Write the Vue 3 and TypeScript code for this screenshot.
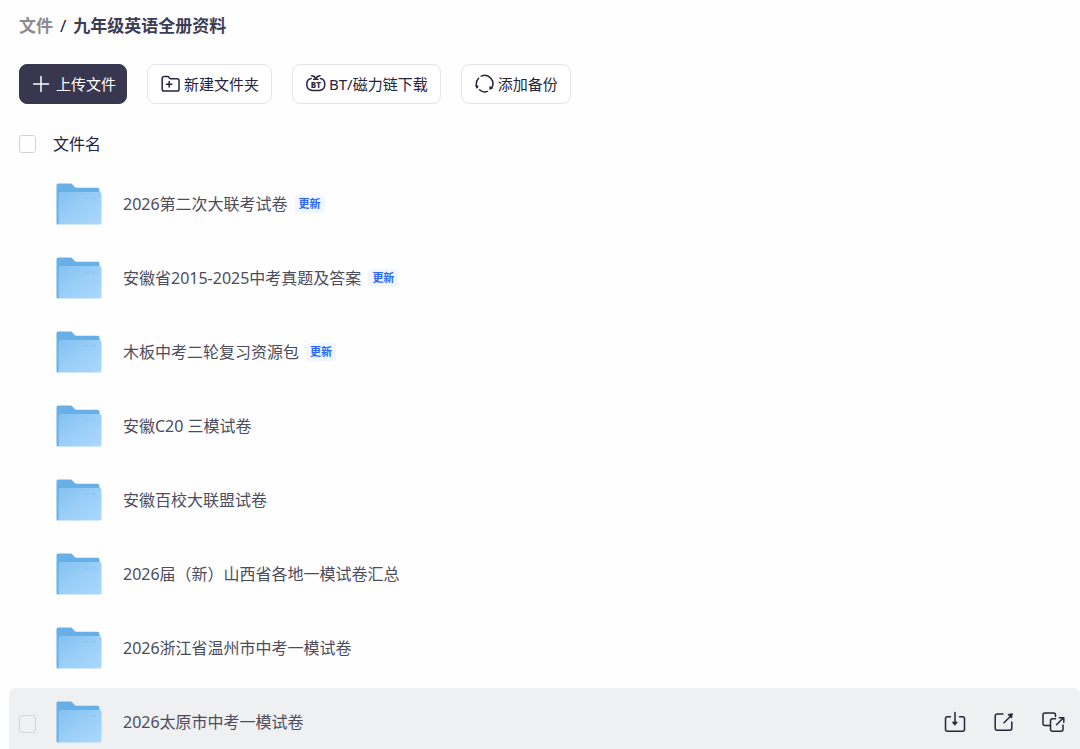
<script setup lang="ts">
import { computed, ref } from 'vue'

interface FolderItem {
  id: number
  name: string
  updated: boolean
}

const folders: FolderItem[] = [
  { id: 1, name: '2026第二次大联考试卷', updated: true },
  { id: 2, name: '安徽省2015-2025中考真题及答案', updated: true },
  { id: 3, name: '木板中考二轮复习资源包', updated: true },
  { id: 4, name: '安徽C20 三模试卷', updated: false },
  { id: 5, name: '安徽百校大联盟试卷', updated: false },
  { id: 6, name: '2026届（新）山西省各地一模试卷汇总', updated: false },
  { id: 7, name: '2026浙江省温州市中考一模试卷', updated: false },
  { id: 8, name: '2026太原市中考一模试卷', updated: false },
]

const activeId = ref(8)
const selected = ref<number[]>([])

const allSelected = computed({
  get: () => selected.value.length === folders.length,
  set: (on: boolean) => {
    selected.value = on ? folders.map((f) => f.id) : []
  },
})
</script>

<template>
  <main class="page">
    <nav class="crumbs" aria-label="路径">
      <a href="#" class="crumb-link">文件</a>
      <span class="crumb-sep">/</span>
      <span class="crumb-current">九年级英语全册资料</span>
    </nav>

    <div class="toolbar">
      <button type="button" class="btn btn-primary">
        <svg class="btn-icon" viewBox="0 0 20 20"><path d="M8 2.5v15M.5 10h15" /></svg>
        <span>上传文件</span>
      </button>
      <button type="button" class="btn">
        <svg class="btn-icon" viewBox="0 0 20 20">
          <path d="M1.2 4.2a1.8 1.8 0 0 1 1.8-1.8h3.600q.8 0 1.200.7l.6 1q.4.7 1.200.7h6.600a1.800 1.800 0 0 1 1.800 1.800v8.600a1.800 1.800 0 0 1-1.800 1.800H3a1.800 1.800 0 0 1-1.800-1.800z" />
          <path d="M8.200 7.500v5.400M5.500 10.200h5.400" />
        </svg>
        <span>新建文件夹</span>
      </button>
      <button type="button" class="btn">
        <svg class="btn-icon" viewBox="0 0 20 20">
          <path d="M5.200 4.600C2.500 5 .8 7.400.8 10.600c0 4 2.200 5.900 6 5.900h6c3.800 0 6-1.900 6-5.900 0-3.200-1.700-5.600-4.400-6M7.600 5.200h4.400" />
          <path d="M5.600 1.800q3 .2 4.200 2.600 1.200-2.400 4.200-2.600" />
          <text class="bt-mark" x="9.800" y="13.500">BT</text>
        </svg>
        <span>BT/磁力链下载</span>
      </button>
      <button type="button" class="btn">
        <svg class="btn-icon" viewBox="0 0 20 20">
          <path d="M6.200 2.100A8.200 8.200 0 0 1 16.500 14M12.500 17.400A8.200 8.200 0 0 1 4.500 15.800M2 12.800A8.200 8.200 0 0 1 3.600 4.200" />
          <path class="solid" d="M15.200 12.800l2.300 1.200-2.300 1.200zM1 11.600l2.200 1-1.200 1.400z" />
        </svg>
        <span>添加备份</span>
      </button>
    </div>

    <div class="list-head">
      <input id="check-all" v-model="allSelected" type="checkbox" class="check" />
      <label for="check-all">文件名</label>
    </div>

    <ul class="list">
      <li
        v-for="folder in folders"
        :key="folder.id"
        class="row"
        :class="{ active: folder.id === activeId }"
        @mouseenter="activeId = folder.id"
      >
        <input
          :id="`folder-${folder.id}`"
          v-model="selected"
          :value="folder.id"
          type="checkbox"
          class="check"
        />
        <label :for="`folder-${folder.id}`" class="entry">
          <svg class="folder" viewBox="0 0 46 42" aria-hidden="true">
            <defs>
              <linearGradient :id="`front-${folder.id}`" x1="0" y1="0" x2="1" y2="1">
                <stop offset="0" stop-color="#84c1f2" />
                <stop offset="0.5" stop-color="#9acff8" />
                <stop offset="1" stop-color="#acd8fd" />
              </linearGradient>
            </defs>
            <path fill="#66afe7" d="M.5 2Q.5.5 2 .5h12.500q1.200 0 2 .9l2.100 2.500q.7.8 1.800.8h21.100q2 0 2 2V20H3v21.500H2Q.5 41.500.5 40z" />
            <path :fill="`url(#front-${folder.id})`" d="M2.500 11q0-2 2-2h39q2 0 2 2v29q0 1.500-1.500 1.500H4q-1.500 0-1.500-1.500z" />
            <path fill="#8cc4f2" d="M28 15h5v1h-5zM35 14.500h5v1h-5z" />
          </svg>
          <span class="name">{{ folder.name }}</span>
          <span v-if="folder.updated" class="badge">更新</span>
        </label>
        <div v-if="folder.id === activeId" class="actions">
          <button type="button" class="action" aria-label="下载">
            <svg viewBox="0 0 24 24">
              <path d="M7.500 6.800H4.500a2 2 0 0 0-2 2v10.400a2 2 0 0 0 2 2h15a2 2 0 0 0 2-2V8.800a2 2 0 0 0-2-2h-3M12 2.500v10" />
              <path class="solid" d="M9.800 12.200h4.400L12 15z" />
            </svg>
          </button>
          <button type="button" class="action" aria-label="分享">
            <svg viewBox="0 0 24 24">
              <path d="M11 4H5.200a2 2 0 0 0-2 2v12.300a2 2 0 0 0 2 2h12.600a2 2 0 0 0 2-2V12M12 12.700l6.500-6.500" />
              <path class="solid" d="M16.300 4.500l4-.8-.7 4z" />
            </svg>
          </button>
          <button type="button" class="action" aria-label="转存">
            <svg viewBox="0 0 24 24">
              <path d="M14.500 6.500V5a2 2 0 0 0-2-2h-8.500a2 2 0 0 0-2 2v8.500a2 2 0 0 0 2 2h5.500M14.500 8.700h-3a2 2 0 0 0-2 2v8.500a2 2 0 0 0 2 2h8.500a2 2 0 0 0 2-2V15M15.500 14.800l6.500-6.500M18.300 7.700h4.500v4.500" />
            </svg>
          </button>
        </div>
      </li>
    </ul>
  </main>
</template>

<style>
body {
  margin: 0;
  background: #fefefe;
}
</style>

<style scoped>
.page {
  box-sizing: border-box;
  height: 100vh;
  overflow: hidden;
  padding-top: 12px;
  font-family: 'Noto Sans', 'Noto Sans CJK SC', sans-serif;
  color: #25253d;
}

.crumbs {
  display: flex;
  align-items: center;
  gap: 7px;
  height: 28px;
  padding-left: 19px;
  font-size: 17px;
  line-height: 28px;
}

.crumb-link {
  color: #8a8b92;
  font-weight: 700;
  text-decoration: none;
}

.crumb-current {
  font-weight: 700;
  color: #3d3c55;
}

.toolbar {
  display: flex;
  gap: 20px;
  padding: 24px 19px 0;
}

.btn {
  box-sizing: border-box;
  display: flex;
  align-items: center;
  gap: 3px;
  height: 40px;
  padding: 0 12px 0 13px;
  border: 1px solid #e6e6ea;
  border-radius: 8px;
  background: #fff;
  color: #25253d;
  font-family: inherit;
  font-size: 15px;
  line-height: 24px;
  white-space: nowrap;
  cursor: pointer;
}

.btn-primary {
  padding-right: 10px;
  border-color: #38374f;
  background: #38374f;
  color: #fff;
}

.btn-icon {
  width: 20px;
  height: 20px;
  flex: none;
}

.btn-icon path,
.action path {
  fill: none;
  stroke: currentColor;
  stroke-width: 1.5;
  stroke-linecap: round;
  stroke-linejoin: round;
}

.btn-icon .solid,
.action .solid {
  fill: currentColor;
  stroke-width: 1;
}

.bt-mark {
  fill: currentColor;
  font-size: 8px;
  font-weight: 800;
  text-anchor: middle;
}

.list-head {
  display: flex;
  align-items: center;
  gap: 17px;
  height: 28px;
  padding: 26px 19px 12px;
  font-size: 16px;
  line-height: 28px;
}

.check {
  appearance: none;
  box-sizing: border-box;
  flex: none;
  width: 17px;
  height: 18px;
  margin: 0;
  border: 1px solid #d3d4d8;
  border-radius: 3px;
  background: transparent;
}

.check:checked {
  border-color: #38374f;
  background: #38374f;
}

.list {
  margin: 0;
  padding: 0 0 0 9px;
  list-style: none;
}

.row {
  box-sizing: border-box;
  display: flex;
  align-items: center;
  height: 74px;
  padding: 0 15px 6px 10px;
  border-radius: 6px;
}

.row .check {
  visibility: hidden;
  margin-top: 4px;
}

.row.active {
  background: #eef0f2;
}

.row.active .check,
.row .check:checked {
  visibility: visible;
}

.entry {
  display: flex;
  flex: 1;
  align-items: center;
  padding-left: 20px;
  min-width: 0;
}

.folder {
  flex: none;
  width: 46px;
  height: 42px;
}

.name {
  margin-left: 21px;
  color: #4c4c5c;
  font-size: 16px;
  line-height: 24px;
  white-space: nowrap;
}

.badge {
  margin-left: 7px;
  padding: 0 4px;
  border-radius: 4px;
  background: #f0f5ff;
  color: #2b66f6;
  font-size: 11px;
  font-weight: 700;
  line-height: 18px;
}

.actions {
  display: flex;
  gap: 25px;
}

.action {
  width: 24px;
  height: 24px;
  padding: 0;
  border: 0;
  background: none;
  color: #25253d;
  cursor: pointer;
}

.action svg {
  display: block;
  width: 24px;
  height: 24px;
}
</style>
